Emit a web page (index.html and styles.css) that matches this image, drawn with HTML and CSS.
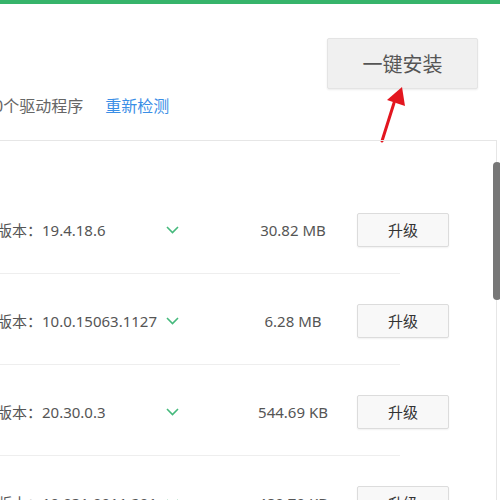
FILE: index.html
```html
<!DOCTYPE html>
<html lang="zh-CN">
<head>
    <meta charset="UTF-8">
    <meta name="viewport" content="width=device-width, initial-scale=1.0">
    <title>驱动升级</title>
    <link rel="stylesheet" href="styles.css">
</head>
<body>
    <div class="topbar"></div>

    <div class="header">
        <div class="summary">
            <span class="count">0个驱动程序</span>
            <a class="rescan" href="#">重新检测</a>
        </div>
        <button class="install-all">一键安装</button>
    </div>

    <svg class="arrow" width="30" height="60" viewBox="0 0 30 60">
        <line x1="2" y1="57" x2="14" y2="19" stroke="#e3161f" stroke-width="3" stroke-linecap="round"/>
        <polygon points="22,3 7,16 25,22" fill="#e3161f"/>
    </svg>

    <div class="list">
        <div class="scrollbar"></div>

        <div class="row">
            <div class="ver">版本：19.4.18.6</div>
            <svg class="chev" width="13" height="8" viewBox="0 0 13 8"><polyline points="1,1 6.5,6.5 12,1" fill="none" stroke="#45b97c" stroke-width="1.6"/></svg>
            <div class="size">30.82 MB</div>
            <button class="upgrade">升级</button>
        </div>
        <div class="row">
            <div class="ver">版本：10.0.15063.1127</div>
            <svg class="chev" width="13" height="8" viewBox="0 0 13 8"><polyline points="1,1 6.5,6.5 12,1" fill="none" stroke="#45b97c" stroke-width="1.6"/></svg>
            <div class="size">6.28 MB</div>
            <button class="upgrade">升级</button>
        </div>
        <div class="row">
            <div class="ver">版本：20.30.0.3</div>
            <svg class="chev" width="13" height="8" viewBox="0 0 13 8"><polyline points="1,1 6.5,6.5 12,1" fill="none" stroke="#45b97c" stroke-width="1.6"/></svg>
            <div class="size">544.69 KB</div>
            <button class="upgrade">升级</button>
        </div>
        <div class="row">
            <div class="ver">版本：10.031.0911.201</div>
            <svg class="chev" width="13" height="8" viewBox="0 0 13 8"><polyline points="1,1 6.5,6.5 12,1" fill="none" stroke="#45b97c" stroke-width="1.6"/></svg>
            <div class="size">489.79 KB</div>
            <button class="upgrade">升级</button>
        </div>
    </div>
</body>
</html>
```

FILE: styles.css
```css
body {
    margin: 0;
    width: 500px;
    height: 500px;
    overflow: hidden;
    position: relative;
    background: #fff;
    font-family: "Noto Sans", "Noto Sans CJK SC", sans-serif;
    color: #555;
}
.topbar {
    height: 4px;
    background: #36b46b;
}
.header {
    height: 136px;
    display: flex;
    justify-content: space-between;
    align-items: flex-start;
}
.summary {
    margin-top: 90px;
    margin-left: -6px;
    font-size: 16px;
    line-height: 24px;
    color: #666;
}
.rescan {
    margin-left: 18px;
    color: #3a8ee6;
    text-decoration: none;
}
.install-all {
    margin-top: 34px;
    margin-right: 22px;
    width: 151px;
    height: 51px;
    background: #f0f0f0;
    border: 1px solid #e4e4e4;
    border-radius: 2px;
    box-shadow: 0 1px 2px rgba(0,0,0,0.08);
    font-family: "Noto Sans CJK SC", sans-serif;
    font-size: 20px;
    color: #555;
    padding: 0;
}
.arrow {
    position: absolute;
    left: 380px;
    top: 84px;
}
.list {
    position: relative;
    margin-right: 3px;
    border-top: 1px solid #e6e6e6;
    border-right: 1px solid #e6e6e6;
    padding-top: 42px;
    height: 400px;
}
.scrollbar {
    position: absolute;
    right: -5px;
    top: 21px;
    width: 8px;
    height: 138px;
    background: #777;
    border-radius: 4px;
}
.row {
    box-sizing: border-box;
    height: 91px;
    padding-top: 3px;
    padding-bottom: 1px;
    display: flex;
    align-items: center;
    background: linear-gradient(#eeeeee, #eeeeee) no-repeat left bottom / 400px 1px;
    font-size: 15px;
}
.ver {
    width: 169px;
    margin-left: -3px;
    white-space: nowrap;
    color: #555;
}
.chev {
    flex: none;
}
.size {
    width: 120px;
    margin-left: 54px;
    text-align: center;
    color: #555;
}
.upgrade {
    margin-left: 4px;
    width: 92px;
    height: 34px;
    padding: 0;
    background: #f8f8f8;
    border: 1px solid #dcdcdc;
    border-radius: 2px;
    box-shadow: 0 1px 2px rgba(0,0,0,0.06);
    font-family: "Noto Sans CJK SC", sans-serif;
    font-size: 15px;
    color: #333;
}
```
